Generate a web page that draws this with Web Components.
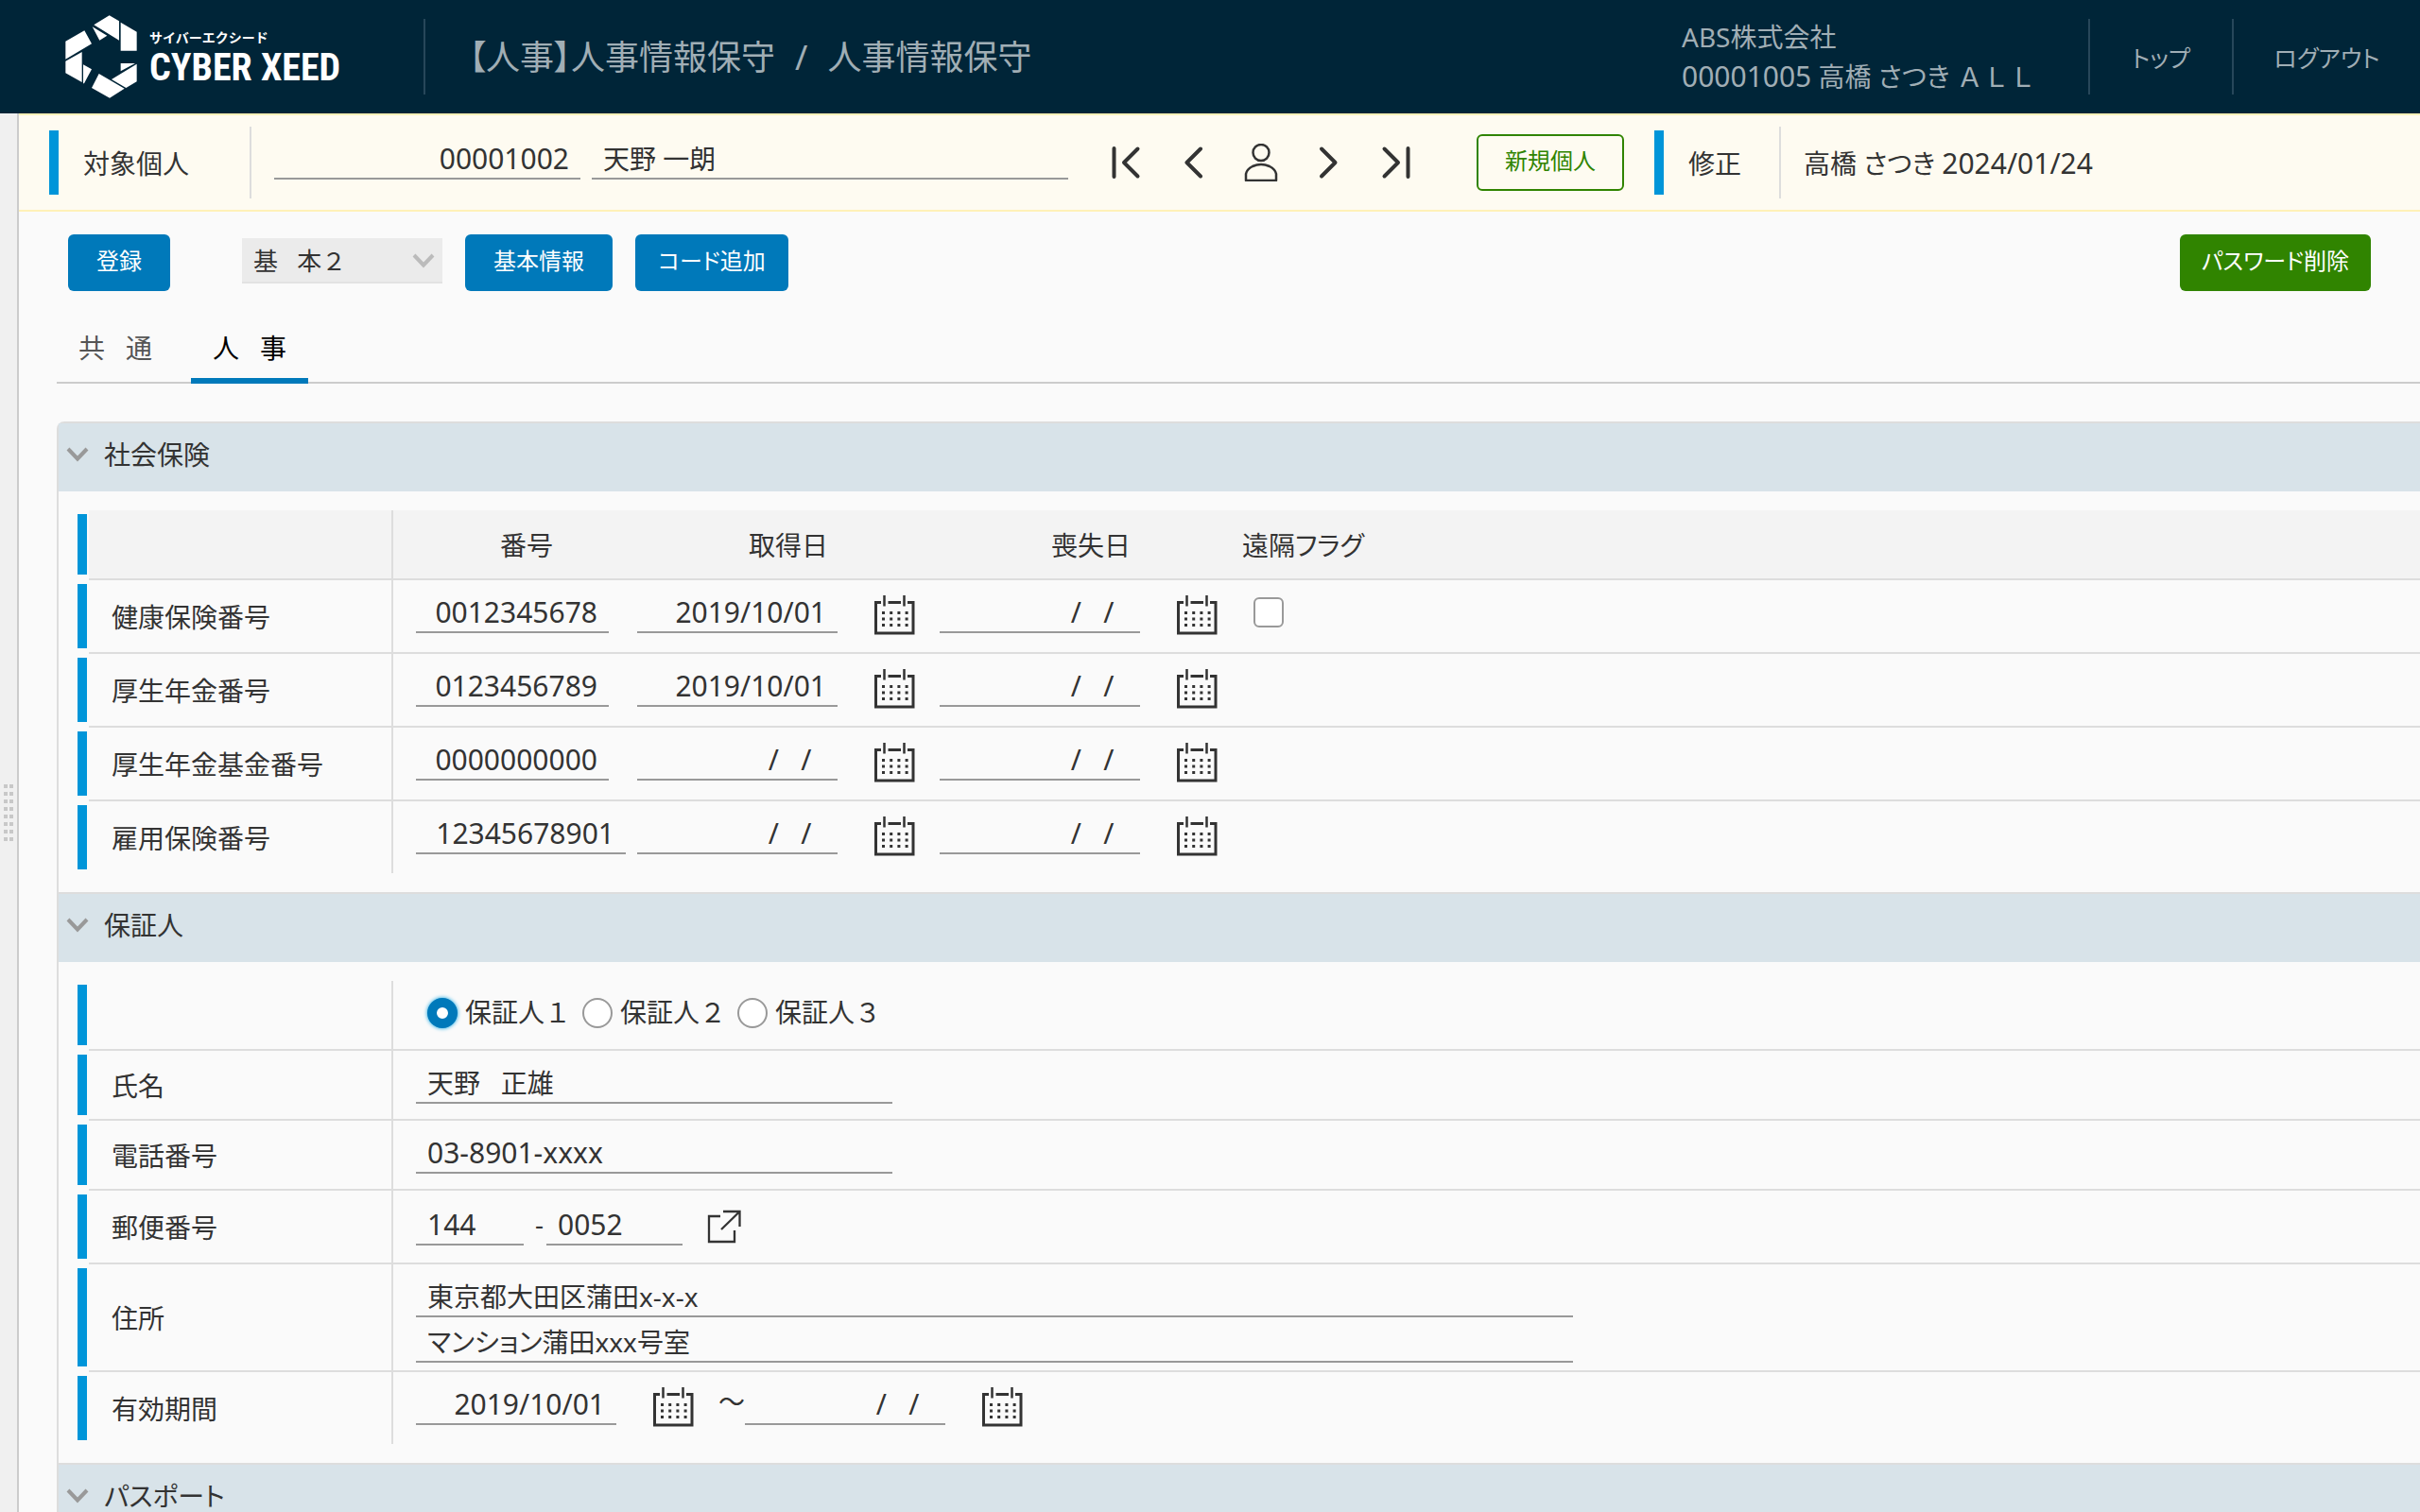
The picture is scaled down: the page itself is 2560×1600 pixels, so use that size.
<!DOCTYPE html>
<html lang="ja">
<head>
<meta charset="utf-8">
<title>人事情報保守</title>
<style>
  body { margin: 0; background: #fafafa; color: #333; font-family: "Noto Sans", "Noto Sans CJK JP", sans-serif; font-size: 28px; line-height: 40px; }
</style>
</head>
<body>
<app-shell></app-shell>
<script>
const COMMON = `
  *, *::before { box-sizing: border-box; }
  button, input, select { font: inherit; color: inherit; margin: 0; }
  button { cursor: pointer; }
  .line { height: 44px; padding: 0 12px; border: 0; border-bottom: 2px solid #999; border-radius: 0; background: none; outline: 0; display: block; min-width: 0; }
  .num { font-size: 30px; }
  .right { text-align: right; }
  .kana { font-feature-settings: "palt"; }
`;

function define(name, html) {
  const tpl = document.createElement('template');
  tpl.innerHTML = html;
  customElements.define(name, class extends HTMLElement {
    constructor() {
      super();
      this.attachShadow({ mode: 'open' }).append(tpl.content.cloneNode(true));
    }
  });
}

const stroke = 'fill="none" stroke="#333" stroke-linecap="round" stroke-linejoin="round"';
const ICONS = {
  first: [40, 40, `<path ${stroke} stroke-width="4" d="M8.5 5v30M33.500 5.500 19 20l14.500 14.500"/>`],
  prev: [40, 40, `<path ${stroke} stroke-width="4" d="M28 5.500 13.500 20 28 34.500"/>`],
  next: [40, 40, `<path ${stroke} stroke-width="4" d="M12 5.500 26.500 20 12 34.500"/>`],
  last: [40, 40, `<path ${stroke} stroke-width="4" d="M31.500 5v30M6.500 5.500 21 20 6.500 34.500"/>`],
  person: [40, 40, `<ellipse ${stroke} stroke-width="2.500" cx="20" cy="9.500" rx="8.500" ry="8.500"/><path ${stroke} stroke-width="2.500" d="M4 39V32Q5 27 11 24Q20 20 29 24Q35 27 36 32V39Z"/>`],
  calendar: [44, 44, `<path fill="none" stroke="#333" stroke-width="2.500" d="M11.500 1v11.500M32.500 1v11.500"/><path fill="none" stroke="#333" stroke-width="3" d="M8 8.500H2.500V41H42V8.500H36M15.500 8.500H29"/><g stroke="#333" stroke-width="3" stroke-dasharray="3 5.200"><path d="M9 19.500h29"/><path d="M9 26h29"/><path d="M9 32.500h29"/></g>`],
  external: [40, 40, `<path fill="none" stroke="#333" stroke-width="2.300" d="M16 9H4V36H31V24M19 4H36.500V20M36.500 4 17 23"/>`],
  down: [24, 16, `<path fill="none" stroke="currentColor" stroke-width="4" d="M2 2 12 12.500 22 2"/>`],
};
customElements.define('ui-icon', class extends HTMLElement {
  connectedCallback() {
    if (this.shadowRoot) return;
    const [w, h, body] = ICONS[this.getAttribute('name')];
    this.attachShadow({ mode: 'open' }).innerHTML =
      `<style>:host{display:block;flex:none;width:${w}px;height:${h}px}svg{display:block}</style><svg width="${w}" height="${h}" viewBox="0 0 ${w} ${h}" aria-hidden="true">${body}</svg>`;
  }
});

define('brand-logo', `<style>
  :host { display: flex; align-items: center; gap: 12px; color: #fff; }
  svg { display: block; flex: none; }
  .names { display: flex; flex-direction: column; padding-top: 6px; }
  .kana { font: bold 14px/18px "Noto Sans CJK JP", sans-serif; }
  .name { font: bold 40px/48px "Roboto Condensed", Roboto, sans-serif; white-space: nowrap; }
</style>
<svg width="78" height="90" viewBox="24 14 234 270" fill="#fff" aria-hidden="true">
  <path d="M118 48 167 18 198 36V97ZM113 54 160 82 136 97ZM203 40 254 70V130H203ZM28 100 88 66 111 108 28 157ZM28 163 80 134V230L28 201ZM84 174 111 189 87 234H84ZM134 203 215 250 168 280 111 248ZM254 172V228L220 248 174 221ZM203 170H249L203 195Z"/>
</svg>
<div class="names"><span class="kana">サイバーエクシード</span><span class="name">CYBER XEED</span></div>`);

define('app-header', `<style>${COMMON}
  :host { display: flex; align-items: center; height: 120px; flex: none; background: #002538; color: #a0aeb5; white-space: nowrap; }
  brand-logo { width: 448px; flex: none; padding-left: 68px; box-sizing: border-box; }
  .title { flex: 1; height: 80px; line-height: 82px; border-left: 2px solid #27475a; padding-left: 46px; font-size: 36px; font-weight: 400; margin: 0; font-feature-settings: "palt"; }
  .title span { margin: 0 21px; }
  .user { line-height: 42px; width: 430px; }
  a { height: 80px; line-height: 82px; border-left: 2px solid #27475a; color: inherit; text-decoration: none; font-feature-settings: "palt"; font-size: 25px; text-align: center; }
  a.top { width: 152px; }
  a.out { width: 199px; }
</style>
<brand-logo></brand-logo>
<h1 class="title">【人事】人事情報保守<span>/</span>人事情報保守</h1>
<div class="user"><div>ABS株式会社</div><div><span class="num">00001005</span> 高橋 <span class="kana">さつき</span> ＡＬＬ</div></div>
<a class="top" href="#">トップ</a><a class="out" href="#">ログアウト</a>`);

define('target-bar', `<style>${COMMON}
  :host { display: flex; height: 104px; background: #fefbf1; border: solid #fff1b8; border-width: 2px 0; padding: 12px 0 0 32px; box-sizing: border-box; white-space: nowrap; }
  .cap { display: flex; height: 76px; border-right: 2px solid #ddd; line-height: 78px; }
  .cap::before { content: ""; width: 10px; margin: 4px 26px 4px 0; background: #0095d9; }
  .who { width: 214px; }
  .mod { width: 134px; margin-left: 32px; }
  .line { margin-top: 12px; }
  #code { width: 324px; margin-left: 24px; }
  #name { width: 504px; margin-left: 12px; }
  nav { display: flex; gap: 32px; margin: 18px 0 0 40px; }
  nav button { width: 40px; height: 40px; padding: 0; border: 0; background: none; }
  .new { width: 156px; height: 60px; margin: 8px 0 0 64px; padding: 0 0 4px; border: 2px solid #308400; border-radius: 6px; background: none; color: #308400; font-size: 24px; }
  .stamp { line-height: 78px; margin-left: 24px; }
</style>
<label class="cap who" for="code">対象個人</label>
<input class="line num right" id="code" value="00001002">
<input class="line" id="name" aria-label="氏名" value="天野 一朗">
<nav>
  <button aria-label="先頭"><ui-icon name="first"></ui-icon></button>
  <button aria-label="前"><ui-icon name="prev"></ui-icon></button>
  <button aria-label="個人検索"><ui-icon name="person"></ui-icon></button>
  <button aria-label="次"><ui-icon name="next"></ui-icon></button>
  <button aria-label="最終"><ui-icon name="last"></ui-icon></button>
</nav>
<button class="new">新規個人</button>
<div class="cap mod">修正</div>
<div class="stamp">高橋 <span class="kana">さつき</span> <span class="num">2024/01/24</span></div>`);

define('action-bar', `<style>${COMMON}
  :host { display: flex; padding: 24px 52px 0; white-space: nowrap; }
  button { height: 60px; padding: 0 0 4px; border: 0; border-radius: 6px; background: #0079ba; color: #fff; font-size: 24px; font-feature-settings: "palt"; }
  .save { width: 108px; margin-right: 76px; }
  .info { width: 156px; margin: 0 24px; }
  .code { width: 162px; }
  .del { width: 202px; margin-left: auto; background: #308400; }
  .pick { display: grid; grid-template-columns: 1fr 32px; height: 48px; margin-top: 4px; width: 212px; align-items: center; }
  select { grid-area: 1 / 1 / 2 / 3; appearance: none; height: 48px; border: 0; border-bottom: 2px solid #e2e2e2; border-radius: 0; background: #ebebeb; padding: 2px 12px 0; font-size: 26px; }
  ui-icon { grid-area: 1 / 2; color: #bbb; pointer-events: none; z-index: 1; }
</style>
<button class="save">登録</button>
<div class="pick"><select aria-label="表示区分"><option>基&nbsp;&nbsp;&nbsp;本２</option></select><ui-icon name="down"></ui-icon></div>
<button class="info">基本情報</button>
<button class="code">コード追加</button>
<button class="del">パスワード削除</button>`);

define('tab-strip', `<style>${COMMON}
  :host { display: flex; gap: 18px; margin: 28px 0 40px 40px; height: 70px; box-shadow: inset 0 -2px #ccc; }
  button { width: 124px; padding: 0; height: 70px; border: 0; border-bottom: 6px solid transparent; background: none; color: #555; }
  .on { color: #000; border-color: #0079ba; }
</style><button role="tab">共&nbsp;&nbsp;&nbsp;通</button><button role="tab" class="on" aria-selected="true">人&nbsp;&nbsp;&nbsp;事</button>`);

define('section-panel', `<style>${COMMON}
  :host { display: block; margin-left: 40px; border-left: 2px solid #ddd; border-top: 2px solid #ddd; }
  :host([first]) { border-top-left-radius: 8px; }
  h2 { margin: 0; height: 72px; padding: 0 0 6px 8px; background: #d8e3e9; font: inherit; display: flex; align-items: center; gap: 16px; font-feature-settings: "palt"; }
  ui-icon { color: #999; }
  .body { padding: 20px 0 20px 20px; }
</style><h2><ui-icon name="down"></ui-icon><slot name="title"></slot></h2><div class="body"><slot></slot></div>`);

define('date-field', `<style>${COMMON}
  :host { display: flex; height: 44px; }
  input.line { width: 212px; }
  button { width: 44px; height: 44px; margin: 3px 0 0 38px; padding: 0; border: 0; background: none; }
</style><input class="line num right"><button aria-label="カレンダー"><ui-icon name="calendar"></ui-icon></button>`);
customElements.get('date-field').prototype.setDate = function (label, value) {
  const input = this.shadowRoot.querySelector('input');
  input.setAttribute('aria-label', label);
  input.value = value || '/\u00a0\u00a0\u00a0/\u00a0\u00a0';
};

customElements.define('insurance-table', class extends HTMLElement {
  constructor() {
    super();
    const rows = [
      ['健康保険番号', '0012345678', '2019/10/01'],
      ['厚生年金番号', '0123456789', '2019/10/01'],
      ['厚生年金基金番号', '0000000000', ''],
      ['雇用保険番号', '12345678901', ''],
    ];
    this.attachShadow({ mode: 'open' }).innerHTML = `<style>${COMMON}
      :host { display: block; }
      table { width: 100%; table-layout: fixed; border-spacing: 0; }
      td, th { padding: 0; font-weight: 400; text-align: left; border-bottom: 2px solid #ddd; }
      tbody td { vertical-align: top; padding-top: 12px; height: 78px; }
      tbody tr:last-child > * { border-bottom: 0; }
      tbody tr:last-child td { height: 76px; }
      thead th { background: #f3f3f3; height: 74px; padding-top: 2px; }
      td.bar { padding: 4px 2px 6px 0; background: #0095d9 content-box; border: 0; }
      tbody tr:last-child td.bar { padding-bottom: 4px; }
      tbody .name { border-right: 2px solid #ddd; padding: 2px 0 0 24px; }
      thead .name { border-right: 2px solid #ddd; }
      thead .n { text-align: right; padding-right: 89px; }
      thead .d { text-align: right; padding-right: 118px; }
      td.n { padding-left: 24px; }
      .line { width: 204px; }
      .long { width: 222px; }
      input[type=checkbox] { display: block; appearance: none; width: 32px; height: 32px; margin: 6px 0 0 12px; border: 2px solid #999; border-radius: 6px; background: #fff; }
    </style>
    <table>
      <colgroup><col style="width:12px"><col style="width:322px"><col style="width:258px"><col style="width:320px"><col style="width:320px"><col></colgroup>
      <thead><tr><td class="bar"></td><th class="name"></th><th class="n">番号</th><th class="d">取得日</th><th class="d">喪失日</th><th class="kana">遠隔フラグ</th></tr></thead>
      <tbody>${rows.map(([name, no], i) => `<tr><td class="bar"></td><th class="name"><label for="n${i}">${name}</label></th>
        <td class="n"><input class="line num right ${no.length > 10 ? 'long' : ''}" id="n${i}" value="${no}"></td>
        <td><date-field></date-field></td><td><date-field></date-field></td>
        <td>${i ? '' : '<input type="checkbox" aria-label="遠隔フラグ">'}</td></tr>`).join('')}</tbody>
    </table>`;
    this.shadowRoot.querySelectorAll('tbody tr').forEach((tr, i) => {
      const [got, lost] = tr.querySelectorAll('date-field');
      got.setDate(rows[i][0] + ' 取得日', rows[i][2]);
      lost.setDate(rows[i][0] + ' 喪失日', '');
    });
  }
});

define('field-row', `<style>${COMMON}
  :host { display: grid; grid-template-columns: 10px 324px 1fr; }
  .bar { background: #0095d9; margin: 4px 0 6px; }
  .label { margin-left: 2px; padding: 2px 0 0 24px; border-right: 2px solid #ddd; border-bottom: 2px solid #ddd; display: flex; align-items: center; }
  .value { border-bottom: 2px solid #ddd; padding: 12px 0 16px 24px; }
  :host([tall]) .value { padding: 14px 0 18px 24px; }
  :host([address]) .value { padding-bottom: 8px; }
  :host([last]) .value { padding-bottom: 20px; border: 0; }
  :host([last]) .label { border-bottom: 0; }
  :host([last]) .bar { margin-bottom: 4px; }
</style><div class="bar"></div><div class="label"><slot name="label"></slot></div><div class="value"><slot></slot></div>`);

customElements.define('guarantor-form', class extends HTMLElement {
  constructor() {
    super();
    this.attachShadow({ mode: 'open' }).innerHTML = `<style>${COMMON}
      :host { display: block; }
      .w { width: 504px; }
      .addr { width: 1224px; max-width: 100%; }
      .addr + .addr { margin-top: 4px; }
      .flex { display: flex; }
      .radios { height: 44px; align-items: center; gap: 12px; padding-left: 12px; }
      .radios label { display: flex; align-items: center; gap: 8px; line-height: 36px; padding-bottom: 2px; }
      input[type=radio] { appearance: none; width: 32px; height: 32px; border: 2px solid #999; border-radius: 50%; background: #fff; margin-top: 2px; }
      input[type=radio]:checked { border: 10px solid #0079ba; box-shadow: 0 0 4px #00a0e0; }
      .z1 { width: 114px; } .z2 { width: 144px; }
      .dash { width: 24px; padding-left: 12px; line-height: 42px; }
      .zip { width: 40px; height: 40px; margin: 4px 0 0 24px; padding: 0; border: 0; background: none; }
      .tilde { width: 54px; text-align: right; line-height: 36px; font-family: "Noto Sans CJK JP", sans-serif; }
    </style>
    <field-row><div class="flex radios">
      <label><input type="radio" name="g" checked>保証人１</label><label><input type="radio" name="g">保証人２</label><label><input type="radio" name="g">保証人３</label></div></field-row>
    <field-row><label slot="label" for="name">氏名</label><input class="line w" id="name" value="天野&nbsp;&nbsp;&nbsp;正雄"></field-row>
    <field-row><label slot="label" for="tel">電話番号</label><input class="line num w" id="tel" value="03-8901-xxxx"></field-row>
    <field-row tall><label slot="label" for="zip">郵便番号</label><div class="flex"><input class="line num z1" id="zip" value="144"><span class="dash">-</span><input class="line num z2" aria-label="郵便番号 下4桁" value="0052"><button class="zip" aria-label="住所検索"><ui-icon name="external"></ui-icon></button></div></field-row>
    <field-row address><label slot="label" for="addr">住所</label><input class="line addr" id="addr" value="東京都大田区蒲田x-x-x"><input class="line addr kana" aria-label="住所2" value="マンション蒲田xxx号室"></field-row>
    <field-row last><span slot="label">有効期間</span><div class="flex"><date-field></date-field><span class="tilde">～</span><date-field></date-field></div></field-row>`;
    const [from, to] = this.shadowRoot.querySelectorAll('date-field');
    from.setDate('有効期間 開始', '2019/10/01');
    to.setDate('有効期間 終了', '');
  }
});

define('side-grip', `<style>
  :host { display: flex; align-items: center; flex: none; width: 20px; box-sizing: border-box; background: #f0f0f0; border-right: 2px solid #ccc; padding-left: 4px; }
  div { width: 10px; height: 60px; background: repeating-linear-gradient(#f0f0f000 0 4px, #f0f0f0 4px 8px), linear-gradient(90deg, #c8c8c8 4px, #f0f0f0 4px 6px, #c8c8c8 6px); }
</style><div></div>`);

define('app-shell', `<style>
  :host { display: flex; flex-direction: column; height: 100vh; }
  .body { display: flex; flex: 1; min-height: 0; }
  main { flex: 1; min-width: 0; overflow-y: auto; scrollbar-width: none; }
</style>
<app-header></app-header>
<div class="body"><side-grip></side-grip><main>
  <target-bar></target-bar>
  <action-bar></action-bar>
  <tab-strip></tab-strip>
  <section-panel first><span slot="title">社会保険</span><insurance-table></insurance-table></section-panel>
  <section-panel><span slot="title">保証人</span><guarantor-form></guarantor-form></section-panel>
  <section-panel><span slot="title">パスポート</span></section-panel>
</main></div>`);
</script>
</body>
</html>
